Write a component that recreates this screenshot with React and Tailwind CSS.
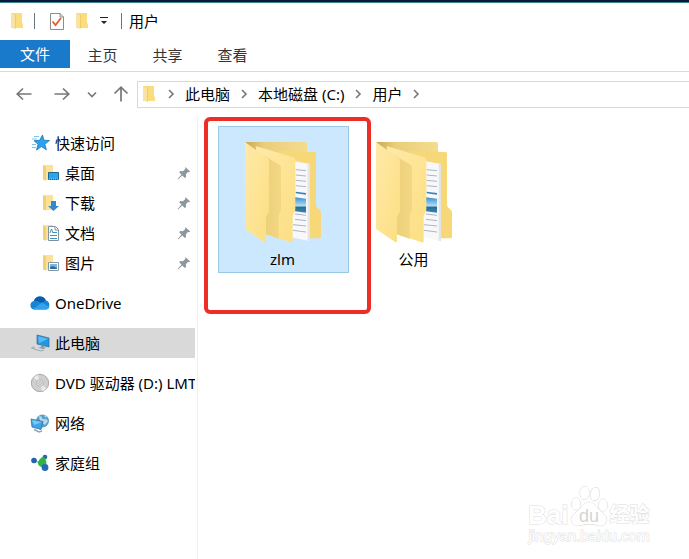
import React from "react";

const SmallFolder = () => (
  <svg className="h-[18px] w-[14px] shrink-0" viewBox="0 0 14 18">
    <path d="M1 1h11v10l1 1v4H1z" fill="#fbdc7e" />
    <path d="M1 1l4 2v14l-4-2z" fill="#f9e3a4" />
    <path d="M5 3v14l1-1V3L2 1z" fill="#f0cd69" />
  </svg>
);

const BigFolder = () => (
  <svg className="h-[102px] w-[76px] shrink-0" viewBox="0 0 228 306">
    <defs>
      <linearGradient id="panel" x1="0" y1="0" x2="1" y2="1">
        <stop offset="0" stopColor="#ffe9a8" />
        <stop offset="1" stopColor="#fcdf82" />
      </linearGradient>
      <linearGradient id="back" x1="0" y1="0" x2="1" y2="0">
        <stop offset="0" stopColor="#c9a950" />
        <stop offset="0.3" stopColor="#e9cd7a" />
        <stop offset="1" stopColor="#f5dc8c" />
      </linearGradient>
      <linearGradient id="fold" x1="0" y1="0" x2="1" y2="0">
        <stop offset="0" stopColor="#ecce78" />
        <stop offset="1" stopColor="#f3d784" />
      </linearGradient>
      <linearGradient id="photo" x1="0" y1="0" x2="0" y2="1">
        <stop offset="0" stopColor="#3a8fd0" />
        <stop offset="0.55" stopColor="#b4dcf2" />
        <stop offset="0.65" stopColor="#2a6f95" />
        <stop offset="1" stopColor="#3385b5" />
      </linearGradient>
    </defs>
    <path d="M0 0H181q5 0 5 5V60H60z" fill="url(#back)" />
    <path d="M100 26L208 30q5 0 5 6V188q0 5 4 9l8 7q3 3 3 8V286q0 3-4 3H170z" fill="#f6d878" />
    <path d="M150 58l45 8v232l-55-12z" fill="#f8f8f8" />
    <path d="M188 66l7 1v231l-7-2z" fill="#e2e4e8" />
    <g stroke="#8292b4" strokeWidth="2">
      <path d="M152 83l31 3M152 99l31 3M152 115l31 3M152 131l31 3M150 216l33 4M150 232l33 4M144 248l39 4M144 265l39 5" />
    </g>
    <path d="M152 149l31 4v5l-31-4z" fill="#3486b5" />
    <path d="M150 166l33 4v42l-33-4z" fill="url(#photo)" />
    <path d="M32 12L145 46q6 2 6 8V204l-8 18v76q0 5-6 3L62 277z" fill="url(#panel)" />
    <path d="M48 36l56 32q4 3 4 8V204l-7 16v70L62 277z" fill="url(#fold)" />
    <path d="M0 0L68 49q4 3 4 8V208l-9 18v70q0 8-6 4L0 261z" fill="url(#panel)" />
  </svg>
);

const TaskIcon = () => (
  <svg className="h-[19px] w-4" viewBox="0 0 16 19" fill="none">
    <path d="M1.500 1.500h9.500l3.500 3.500v12.500h-13z" fill="#fff" stroke="#8b8b8b" />
    <path d="M11 1.500v3.500h3.500" stroke="#8b8b8b" />
    <path d="M3.500 9.500l3 3.500 5.500-7" stroke="#e25b2c" strokeWidth="1.800" />
  </svg>
);

const Arrow = ({ d }) => (
  <svg className="h-4 w-4" viewBox="0 0 16 16" fill="none" stroke="#777" strokeWidth="1.700">
    <path d={d} />
  </svg>
);

const Chevron = () => (
  <svg className="h-3 w-3 shrink-0" viewBox="0 0 12 12" fill="none" stroke="#777" strokeWidth="1.600">
    <path d="M4 2l4 4-4 4" />
  </svg>
);

const PinIcon = () => (
  <svg className="h-[14px] w-[14px] shrink-0" viewBox="0 0 14 14" fill="#8d979e">
    <path d="M8.300 1l4.900 4.500-1.300.7-1-.2-2 2.300.2 2.700-1.300 1-2.500-2.600L1 13.400l-.4-.5L4.500 8.600 2.200 6.300l1-1.200 2.700.2 2.400-2.200z" />
  </svg>
);

const StarIcon = () => (
  <svg className="h-[18px] w-5" viewBox="0 0 20 18">
    <path d="M11.500 1l1.300 5.200 5.700.3-4.700 3.700 1.600 5.600-5-3.200-4.900 3.500 1.600-5.900L3 6.700l5.600-.4z" fill="#2ba2ec" stroke="#1678b8" strokeWidth=".8" />
    <path d="M3 2.500h5M1 5h5M1 10.500h4M1 13.500h4" stroke="#82c3ec" />
  </svg>
);

const FolderWith = ({ children }) => (
  <svg className="h-[18px] w-[18px]" viewBox="0 0 18 18">
    <path d="M1 1h10v15H1z" fill="#fbe19a" />
    <path d="M1 1l3 2v14l-3-2z" fill="#f3cf72" />
    {children}
  </svg>
);

const DesktopIcon = () => (
  <FolderWith>
    <path d="M6.500 8.500h10v7h-10z" fill="#29a5ee" stroke="#1e668f" />
    <path d="M7 15h9" stroke="#a0d3ef" strokeDasharray="1 1" />
  </FolderWith>
);

const DownloadIcon = () => (
  <FolderWith>
    <path d="M9 7h5v5h3l-5.500 5L6 12h3z" fill="#3289d2" />
  </FolderWith>
);

const DocumentIcon = () => (
  <FolderWith>
    <path d="M6.500 2.500h7l3 3v11h-10z" fill="#fff" stroke="#7e929c" />
    <path d="M13 3v3h3" fill="none" stroke="#7e929c" />
    <path d="M11 8.500h4M8 11.500h7M8 14.500h7" stroke="#3b91bd" />
    <path d="M8 9l1.500-4L11 9" fill="none" stroke="#3b91bd" />
  </FolderWith>
);

const PictureIcon = () => (
  <FolderWith>
    <path d="M6.500 8.500h10v8h-10z" fill="#fff" stroke="#8598a4" />
    <path d="M8 10h7v5H8z" fill="#78b8e3" />
    <path d="M8 15v-2l3-1 4 2v1z" fill="#326e91" />
  </FolderWith>
);

const CloudIcon = () => (
  <svg className="h-[14px] w-5" viewBox="0 0 20 14">
    <path d="M4 5a6.200 6.200 0 0 1 11.800-.4A4.600 4.600 0 0 1 16 13.500H4.200A4.300 4.300 0 0 1 4 5z" fill="#1685d6" />
    <path d="M4 5a6.200 6.200 0 0 1 11.800-.4l-4.300 2.400-4-2z" fill="#0b5cab" />
    <path d="M3 13l9-6.500 7.500 4.500q-1 2.500-3.500 2.500H4z" fill="#2fa4ec" />
  </svg>
);

const ComputerIcon = () => (
  <svg className="h-[18px] w-5" viewBox="0 0 20 18">
    <path d="M7 1l12 3v9L7 10z" fill="#2596e3" stroke="#38749b" strokeWidth=".8" />
    <path d="M8 2.200l10 2.600-9 4.500z" fill="#5bbaf3" />
    <path d="M11 11v2l-3 .7 5 1.300 3-1-2-1v-1z" fill="#8c9dac" />
    <path d="M1 14l10 3 3-1M2 13l3 .5" fill="none" stroke="#9baab5" />
  </svg>
);

const DiscIcon = () => (
  <svg className="h-5 w-5" viewBox="0 0 20 20">
    <circle cx="10" cy="10" r="8.700" fill="#cfcfcf" stroke="#9d9d9d" strokeWidth=".8" />
    <path d="M10 10L3.500 4.500A8.300 8.300 0 0 1 8 1.900zM10 10l6.500 5.500a8.300 8.300 0 0 1-4.500 2.600z" fill="#eaeaea" />
    <circle cx="10" cy="10" r="3.400" fill="#dedede" stroke="#aaa" strokeWidth=".7" />
    <circle cx="10" cy="10" r="1.300" fill="#fff" stroke="#999" strokeWidth=".7" />
  </svg>
);

const NetworkIcon = () => (
  <svg className="h-5 w-5" viewBox="0 0 20 20">
    <circle cx="12.500" cy="8" r="6.500" fill="#5b9fcc" />
    <path d="M9 3q3 0 3 2t4 1l2 2-3 4-5-4zM14 1.800l3 2-2 .7z" fill="#b5d9ea" />
    <path d="M1 6l12 2.500-2 8L2 14z" fill="#3fa3e6" stroke="#2d739f" strokeWidth=".8" />
    <path d="M2 7l10 2-8 3z" fill="#79c7f4" />
    <path d="M4 16.500l5 2.500 3-1" fill="none" stroke="#8ba7b8" strokeWidth="1.500" />
  </svg>
);

const HomeGroupIcon = () => (
  <svg className="h-5 w-5" viewBox="0 0 20 20">
    <path d="M4 8l8 2 2-6M12 10l3 6" stroke="#8fc5dc" strokeWidth="1.500" fill="none" />
    <circle cx="4" cy="7.500" r="2.800" fill="#2463a9" />
    <circle cx="15" cy="4" r="2.300" fill="#236b9f" />
    <path d="M13 3.500q3 2 3.500 6.500-1 4-5 4-4-1-3.500-5 1-3 5-5.500z" fill="#2fb344" />
    <circle cx="15" cy="14.500" r="3.400" fill="#2469b3" />
  </svg>
);

const quickAccess = [
  { name: "桌面", icon: DesktopIcon },
  { name: "下载", icon: DownloadIcon },
  { name: "文档", icon: DocumentIcon },
  { name: "图片", icon: PictureIcon },
];

const locations = [
  { name: "OneDrive", icon: CloudIcon },
  { name: "此电脑", icon: ComputerIcon, active: true },
  { name: "DVD 驱动器 (D:) LMT", icon: DiscIcon },
  { name: "网络", icon: NetworkIcon },
  { name: "家庭组", icon: HomeGroupIcon },
];

const crumbs = ["此电脑", "本地磁盘 (C:)", "用户"];

const TitleBar = () => (
  <header className="flex h-[37px] items-center pb-px pl-[10px]">
    <SmallFolder />
    <span className="ml-[10px] h-4 w-px bg-gray-500" />
    <button type="button" aria-label="属性" className="ml-[14px]">
      <TaskIcon />
    </button>
    <button type="button" aria-label="新建文件夹" className="ml-[10px]">
      <SmallFolder />
    </button>
    <button type="button" aria-label="自定义快速访问工具栏" className="ml-[11px]">
      <svg className="h-2 w-2" viewBox="0 0 8 8">
        <path d="M0 0h8v1H0zM1 4h6L4 7z" fill="#222" />
      </svg>
    </button>
    <span className="ml-[13px] h-4 w-px bg-gray-500" />
    <h1 className="ml-[7px]">用户</h1>
  </header>
);

const Ribbon = () => (
  <nav className="flex h-8 items-start border-b border-[#dadbdc] text-[#333]">
    <button type="button" className="h-7 w-[70px] bg-[#1979ca] text-white">文件</button>
    {["主页", "共享", "查看"].map((tab) => (
      <button key={tab} type="button" className="h-[30px] w-[65px]">
        {tab}
      </button>
    ))}
  </nav>
);

const AddressBar = () => (
  <div className="flex h-11 items-center">
    <div className="flex w-[137px] shrink-0 items-center pl-4">
      <button type="button" aria-label="后退">
        <Arrow d="M15.500 8H1M7 2.500L1.200 8 7 13.500" />
      </button>
      <button type="button" aria-label="前进" className="ml-[22px]">
        <Arrow d="M.5 8H15M9 2.500L14.800 8 9 13.500" />
      </button>
      <button type="button" aria-label="最近浏览的位置" className="ml-4">
        <svg className="h-3 w-3" viewBox="0 0 12 12" fill="none" stroke="#777" strokeWidth="1.600">
          <path d="M2 4.500l4 4 4-4" />
        </svg>
      </button>
      <button type="button" aria-label="上移" className="ml-[15px]">
        <Arrow d="M8 15.500V1M1.500 7.500L8 1.200l6.500 6.300" />
      </button>
    </div>
    <nav className="flex h-[27px] flex-1 items-center border border-r-0 border-[#d9d9d9] pb-px pl-1">
      <SmallFolder />
      <span className="ml-[9px]"><Chevron /></span>
      {crumbs.map((crumb) => (
        <React.Fragment key={crumb}>
          <a href="#" className="mx-2 whitespace-nowrap">{crumb}</a>
          <Chevron />
        </React.Fragment>
      ))}
    </nav>
  </div>
);

const Sidebar = () => (
  <aside className="w-[198px] shrink-0 border-r border-[#f0f0f0] pt-3 pr-[2px]">
    <a href="#" className="flex h-[30px] items-center gap-1 pl-[31px]">
      <StarIcon />
      快速访问
    </a>
    {quickAccess.map((item) => (
      <a key={item.name} href="#" className="flex h-[30px] items-center pr-1 pl-[42px]">
        <item.icon />
        <span className="ml-[5px] flex-1">{item.name}</span>
        <PinIcon />
      </a>
    ))}
    <div className="mt-[10px] flex flex-col gap-[10px]">
      {locations.map((item) => (
        <a
          key={item.name}
          href="#"
          className={`flex h-[30px] items-center gap-[5px] overflow-hidden pl-[30px] whitespace-nowrap ${
            item.active ? "bg-[#d9d9d9]" : ""
          }`}
        >
          <span className="shrink-0">
            <item.icon />
          </span>
          {item.name}
        </a>
      ))}
    </div>
  </aside>
);

const FolderTile = ({ name, selected }) => (
  <button
    type="button"
    className={`flex h-[147px] w-[131px] flex-col items-center border pt-[15px] pr-[2px] ${
      selected ? "border-[#99c9e6] bg-[#cce8ff]" : "border-transparent"
    }`}
  >
    <BigFolder />
    <span className="mt-[5px] leading-5">{name}</span>
  </button>
);

const Watermark = () => (
  <div className="absolute right-[39px] bottom-[14px] w-[122px] text-white [-webkit-text-stroke:1px_#dedede] [paint-order:stroke_fill]">
    <div className="flex h-[42px] items-end leading-6">
      <span className="font-['Liberation_Sans',sans-serif] text-[26px] font-bold">Bai</span>
      <svg className="ml-[2px] h-[42px] w-[38px] shrink-0" viewBox="0 0 38 42" fill="#fff" stroke="#d6d6d6">
        <ellipse cx="6" cy="19" rx="4.500" ry="6" />
        <ellipse cx="14.500" cy="8" rx="4.500" ry="6.500" />
        <ellipse cx="25" cy="9" rx="4.500" ry="6.500" transform="rotate(10 25 9)" />
        <ellipse cx="33" cy="20" rx="4.500" ry="6" />
        <path d="M19 17q5 0 8 6l7 6q5 5 1 10-3 3-8 1-8-2-16 0-5 2-8-1-4-5 1-10l7-6q3-6 8-6z" />
        <text x="9" y="37" fontSize="18" fontFamily="Liberation Sans, sans-serif" className="[-webkit-text-stroke:0px]" fill="#d4d4d4" stroke="none">du</text>
      </svg>
      <span className="ml-px text-[20px] font-bold whitespace-nowrap">经验</span>
    </div>
    <p className="text-center font-['Liberation_Sans',sans-serif] text-[15px] leading-[18px]">
      jingyan.baidu.com
    </p>
  </div>
);

export default function App() {
  return (
    <div className="relative flex min-h-screen flex-col overflow-hidden border-t-2 border-[#071a38] bg-white font-['Noto_Sans','Noto_Sans_CJK_SC',sans-serif] text-[15px] leading-5 text-black">
      <div className="h-px bg-[#3f8490]" />
      <TitleBar />
      <Ribbon />
      <AddressBar />
      <div className="flex flex-1">
        <Sidebar />
        <main className="relative flex flex-1 items-start pt-[10px] pl-5">
          <FolderTile name="zlm" selected />
          <FolderTile name="公用" />
          <div className="pointer-events-none absolute top-px left-[6px] h-[197px] w-[167px] rounded-md border-4 border-[#ec2e27]" />
        </main>
      </div>
      <Watermark />
    </div>
  );
}
